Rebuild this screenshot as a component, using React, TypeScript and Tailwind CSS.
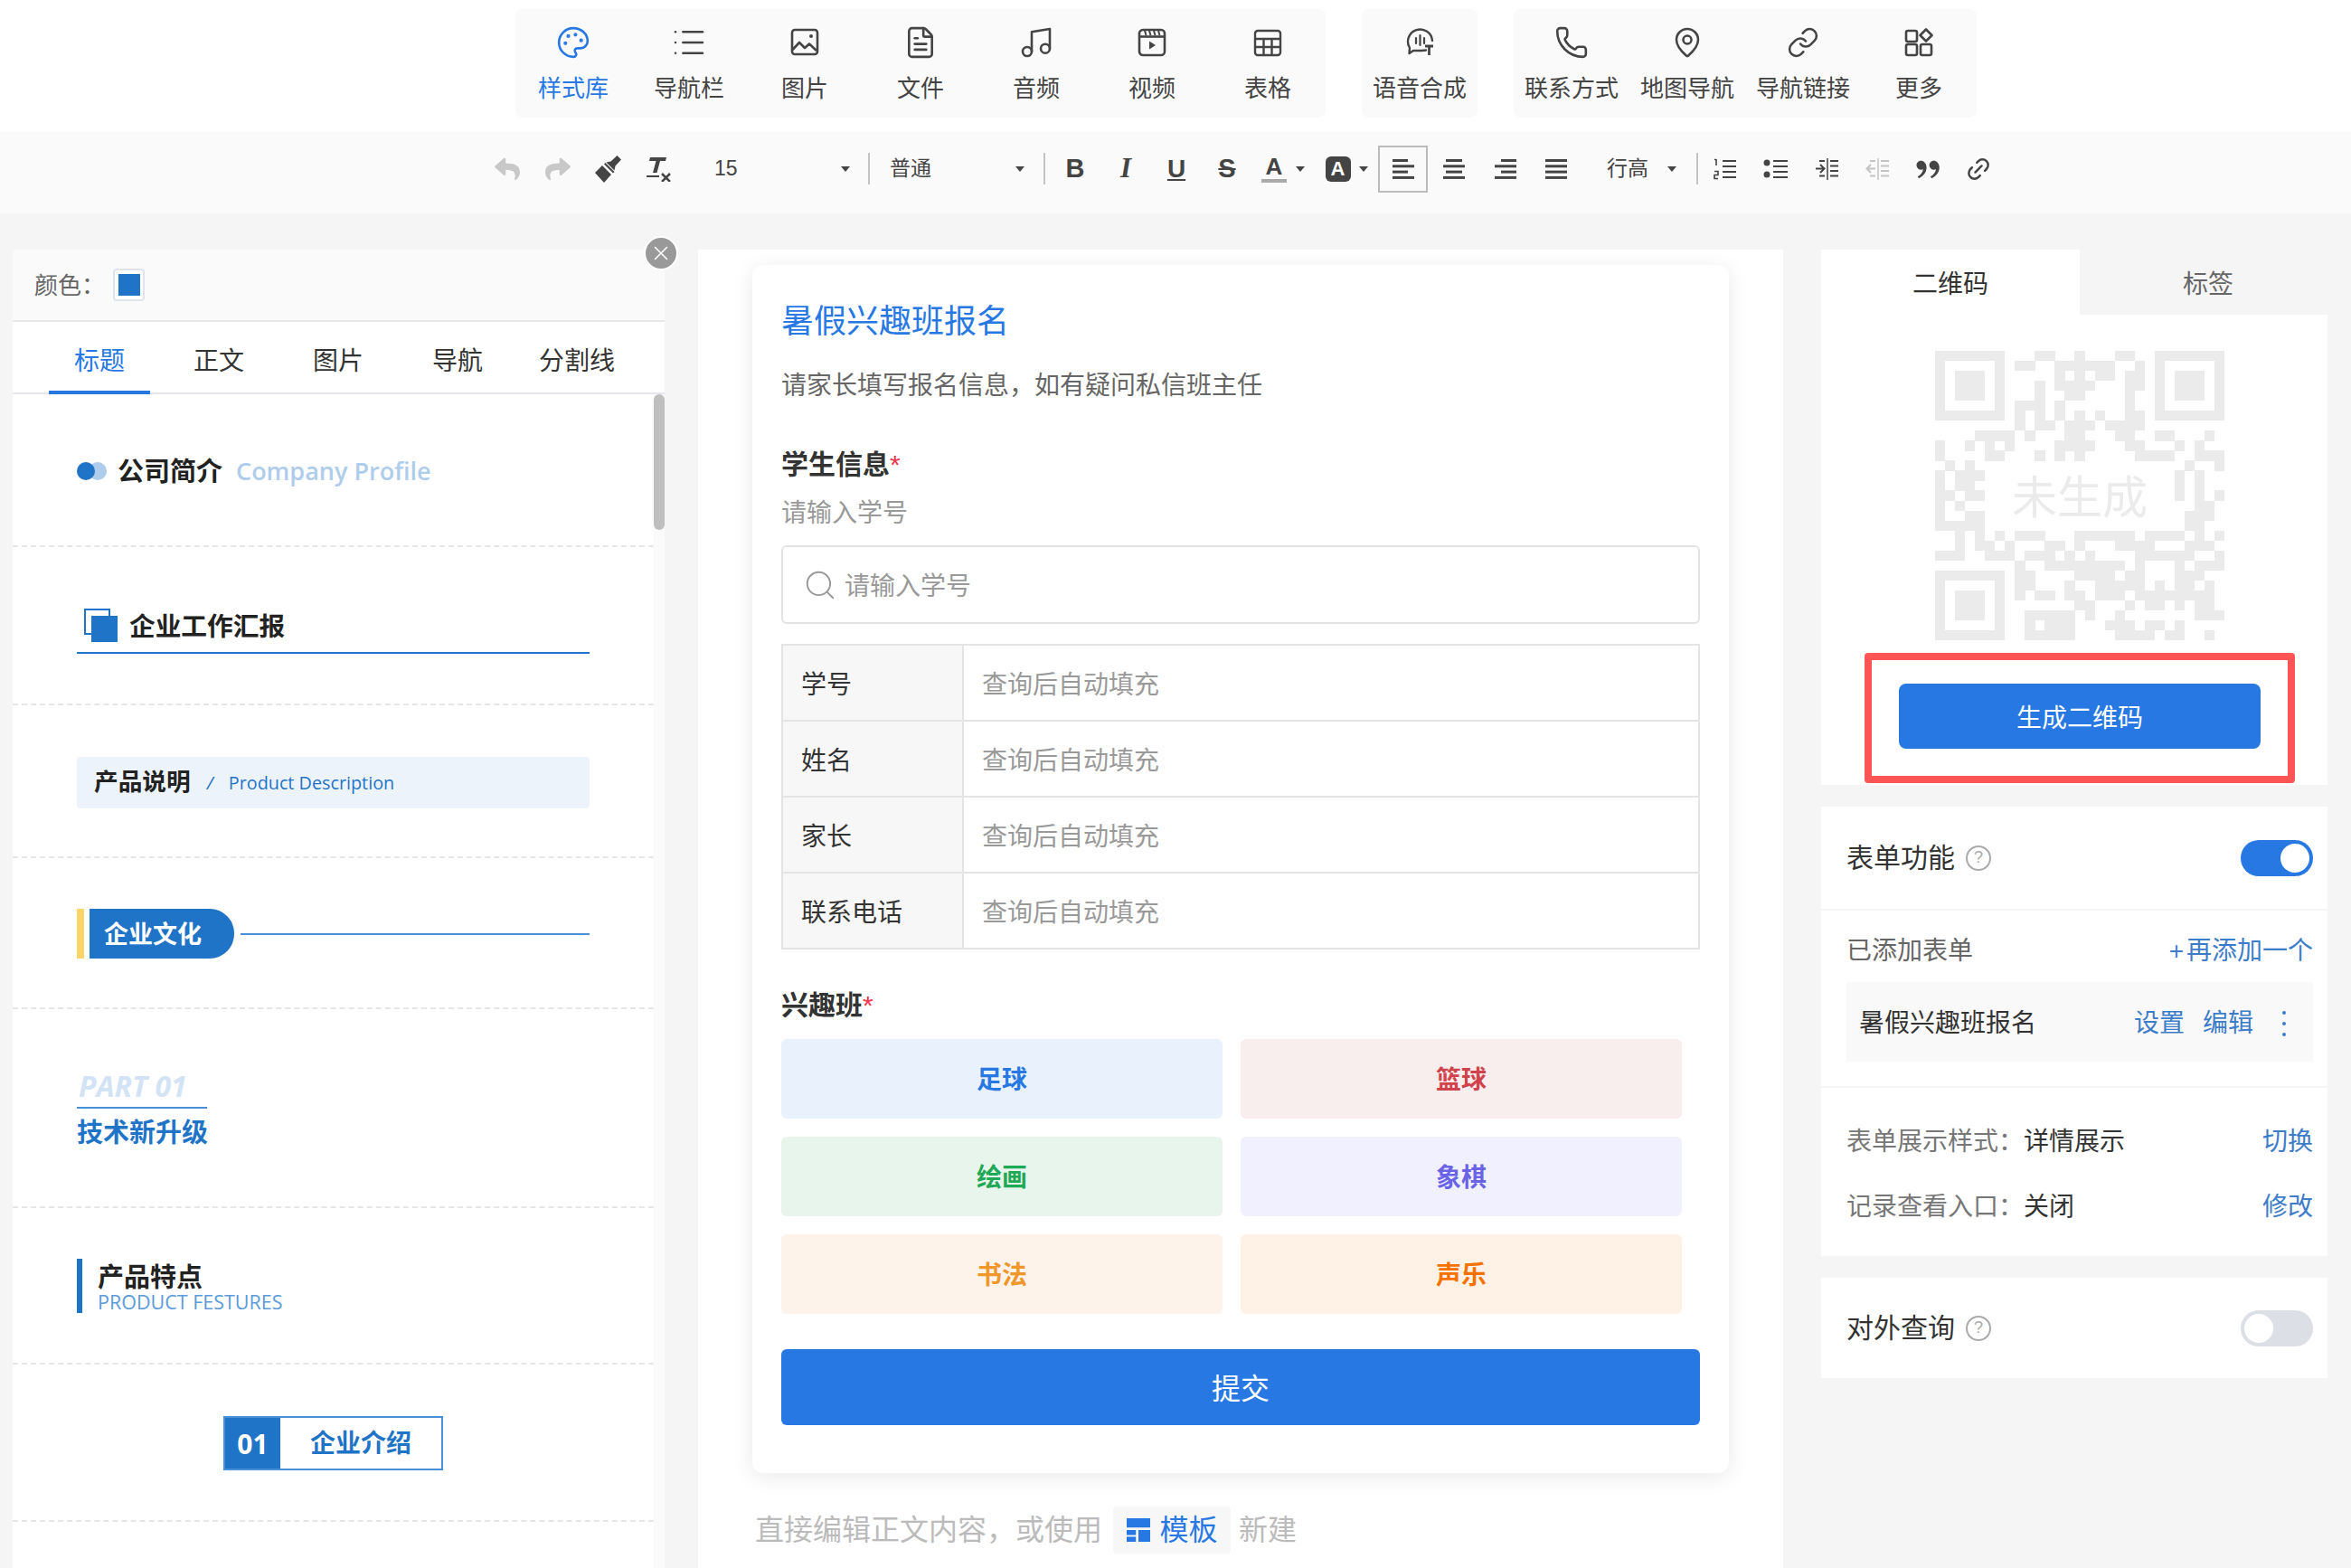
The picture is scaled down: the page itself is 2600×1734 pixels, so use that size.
import type { ReactNode } from 'react'
import { FileText, Link, Link2, List, MapPin, Music, Palette, Phone, Search, X } from 'lucide-react'
import { FaReply, FaShare } from 'react-icons/fa'
import { RiDoubleQuotesR } from 'react-icons/ri'

const iconClass = 'h-8 w-8'

function ImageIcon() {
  return (
    <svg viewBox="0 0 32 32" className={iconClass} fill="none" stroke="currentColor" strokeWidth="2.6" strokeLinejoin="round">
      <rect x="2" y="2" width="28" height="27" rx="3" />
      <path d="M2.5 24l7.5-8 6 6 5-4.500 8 7.500" />
      <circle cx="23" cy="9" r="2" fill="currentColor" stroke="none" />
    </svg>
  )
}

function VideoIcon() {
  return (
    <svg viewBox="0 0 32 32" className={iconClass} fill="none" stroke="currentColor" strokeWidth="2.6">
      <rect x="2" y="2" width="28" height="28" rx="4" />
      <path d="M2 9.500h28" />
      <path d="M8 3l1.500 5M13 3l1.500 5M18 3l1.500 5M23 3l1.500 5" strokeWidth="2" />
      <path d="M13 14.500l7 4.500-7 4.500z" fill="currentColor" stroke="none" />
    </svg>
  )
}

function TableIcon() {
  return (
    <svg viewBox="0 0 32 32" className={iconClass} fill="none" stroke="currentColor" strokeWidth="2.4">
      <rect x="2" y="3" width="28" height="27" rx="3" />
      <path d="M2 12h28M2 21h28M11.500 12v18M20.500 12v18" />
    </svg>
  )
}

function SpeechIcon() {
  return (
    <svg viewBox="0 0 32 32" className={iconClass} fill="none" stroke="currentColor" strokeWidth="2.4" strokeLinecap="round" strokeLinejoin="round">
      <path d="M23 24.500l-5 .500H9l-4.500 3 .500-6A13.500 13.500 0 1 1 30 14" />
      <path d="M12 11v6M16.500 8v11M21 11v6" strokeWidth="2.200" />
      <path d="M22 20h9M26.500 20v10" strokeLinecap="butt" strokeWidth="2.800" />
    </svg>
  )
}

function MoreIcon() {
  return (
    <svg viewBox="0 0 32 32" className={iconClass} fill="none" stroke="currentColor" strokeWidth="2.6" strokeLinejoin="round">
      <rect x="2" y="3" width="12" height="12" rx="2" />
      <rect x="2" y="18" width="12" height="12" rx="2" />
      <rect x="18" y="18" width="12" height="12" rx="2" />
      <path d="M24 1.500l6.500 6.500-6.500 6.500-6.500-6.500z" />
    </svg>
  )
}

const groups: { label: string; icon: ReactNode; active?: boolean }[][] = [
  [
    { label: '样式库', icon: <Palette size={38} strokeWidth={1.650} />, active: true },
    { label: '导航栏', icon: <List size={40} strokeWidth={1.500} /> },
    { label: '图片', icon: <ImageIcon /> },
    { label: '文件', icon: <FileText size={38} strokeWidth={1.650} /> },
    { label: '音频', icon: <Music size={40} strokeWidth={1.550} /> },
    { label: '视频', icon: <VideoIcon /> },
    { label: '表格', icon: <TableIcon /> },
  ],
  [{ label: '语音合成', icon: <SpeechIcon /> }],
  [
    { label: '联系方式', icon: <Phone size={38} strokeWidth={1.650} /> },
    { label: '地图导航', icon: <MapPin size={36} strokeWidth={1.700} /> },
    { label: '导航链接', icon: <Link size={36} strokeWidth={1.700} /> },
    { label: '更多', icon: <MoreIcon /> },
  ],
]

function TopBar() {
  return (
    <div className="flex h-[146px] gap-[40px] bg-white pl-[570px] pt-[10px]">
      {groups.map((group) => (
        <div key={group[0].label} className="flex h-[120px] rounded-lg bg-[#fafafa]">
          {group.map((item) => (
            <div
              key={item.label}
              className={`flex w-[128px] flex-col items-center pt-[17px] text-[26px] leading-[36px] ${item.active ? 'text-[#2878e4]' : 'text-[#444]'}`}
            >
              <span className="flex h-[40px] w-[44px] items-center justify-center">{item.icon}</span>
              <span className="mt-[13px] whitespace-nowrap">{item.label}</span>
            </div>
          ))}
        </div>
      ))}
    </div>
  )
}

function Caret() {
  return <span className="h-0 w-0 border-x-[5px] border-t-[6px] border-x-transparent border-t-[#444]" />
}

function Sep() {
  return <span className="h-[35px] w-[2px] bg-[#c4c4c4]" />
}

function Btn({ w = 'w-[56px]', children }: { w?: string; children: ReactNode }) {
  return <span className={`flex h-[52px] items-center justify-center ${w}`}>{children}</span>
}

function BrushIcon() {
  return (
    <svg viewBox="0 0 30 30" className="h-[30px] w-[30px]" fill="#444">
      <path d="M0 19l8-8 10 10-8 9z" />
      <path d="M10 9.500l1.500-1.500 10 10-1.500 1.500z" />
      <path d="M12.500 7.500l5-1 7-6.500 4.500 4.500-6.500 7-1 5z" />
    </svg>
  )
}

function ClearIcon() {
  return (
    <svg viewBox="0 0 28 28" className="h-[28px] w-[28px]" fill="#444">
      <path d="M4 1h18l-1 4h-6l-3.500 13H7l3.500-13H3z" />
      <rect x="0" y="21" width="14" height="2" />
      <path d="M17 19l9 9M26 19l-9 9" stroke="#444" strokeWidth="2.500" />
    </svg>
  )
}

function Bars({ rows }: { rows: [number, number][] }) {
  return (
    <svg viewBox="0 0 24 22" className="h-[22px] w-[24px]" fill="#444">
      {rows.map(([x, w], i) => (
        <rect key={i} x={x} y={i * 6.300} width={w} height="3" />
      ))}
    </svg>
  )
}

function OrderedIcon() {
  return (
    <svg viewBox="0 0 26 24" className="h-[24px] w-[26px]" fill="none" stroke="#444" strokeWidth="2.200">
      <path d="M10 3h15M10 9h15M10 15h15M10 21h15" />
      <path d="M3 1v7M1 1.500h2M1 14.500h4v4H1v4h4" strokeWidth="1.600" />
    </svg>
  )
}

function BulletIcon() {
  return (
    <svg viewBox="0 0 28 24" className="h-[24px] w-[28px]" fill="none" stroke="#444" strokeWidth="2.200">
      <path d="M11 3h16M11 9h16M11 15h16M11 21h16" />
      <circle cx="4" cy="5" r="3.500" fill="#444" stroke="none" />
      <circle cx="4" cy="18" r="3.500" fill="#444" stroke="none" />
    </svg>
  )
}

function IndentIcon({ out }: { out?: boolean }) {
  return (
    <svg viewBox="0 0 28 28" className="h-[28px] w-[28px]" fill="none" stroke={out ? '#c4c4c4' : '#444'} strokeWidth="2">
      <path d="M15 2v24" strokeWidth="1.500" />
      <path d="M18 5h9M18 10.500h9M18 16h9M18 21.500h9M6 5h6M6 21.500h6" />
      {out ? <path d="M12 13.500H3M7 9l-4.500 4.500L7 18" /> : <path d="M2 13.500h9M7 9l4.500 4.500L7 18" />}
    </svg>
  )
}

function EditorToolbar() {
  return (
    <div className="flex h-[90px] items-center bg-[#fafafa] pb-[9px] pl-[533px] text-[#444]">
      <Btn><FaReply size={28} color="#c8c8c8" /></Btn>
      <Btn><FaShare size={28} color="#c8c8c8" /></Btn>
      <Btn><BrushIcon /></Btn>
      <Btn><ClearIcon /></Btn>
      <span className="flex w-[203px] items-center justify-between pl-[33px] pr-[20px] text-[23px]">
        15 <Caret />
      </span>
      <Sep />
      <span className="flex w-[192px] items-center justify-between pl-[22px] pr-[21px] text-[23px]">
        普通 <Caret />
      </span>
      <Sep />
      <span className="w-[5px]" />
      <Btn><b className="text-[29px]">B</b></Btn>
      <Btn><i className="font-['Liberation_Serif',serif] text-[31px] font-bold">I</i></Btn>
      <Btn><b className="text-[28px] underline underline-offset-2">U</b></Btn>
      <Btn><b className="text-[29px] line-through">S</b></Btn>
      <Btn w="w-[48px]">
        <span className="flex flex-col items-center">
          <b className="text-[26px] leading-[27px]">A</b>
          <span className="h-[4px] w-[28px] bg-[#aaa]" />
        </span>
      </Btn>
      <span className="flex w-[10px] justify-center"><Caret /></span>
      <span className="ml-[13px] w-[47px]">
        <Btn w="w-[47px]">
          <span className="flex h-[28px] w-[28px] items-center justify-center rounded-md bg-[#444] text-[22px] font-bold text-white">A</span>
        </Btn>
      </span>
      <span className="flex w-[10px] justify-center"><Caret /></span>
      <span className="ml-[11px] flex h-[52px] w-[55px] items-center justify-center border-2 border-[#bbb]">
        <Bars rows={[[0, 17], [0, 24], [0, 17], [0, 24]]} />
      </span>
      <Btn w="w-[58px]"><Bars rows={[[3, 18], [0, 24], [3, 18], [0, 24]]} /></Btn>
      <Btn><Bars rows={[[7, 17], [0, 24], [7, 17], [0, 24]]} /></Btn>
      <Btn><Bars rows={[[0, 24], [0, 24], [0, 24], [0, 24]]} /></Btn>
      <span className="ml-[28px] flex w-[99px] items-center text-[23px]">
        行高
        <span className="ml-[21px] flex"><Caret /></span>
      </span>
      <Sep />
      <span className="w-[2px]" />
      <Btn><OrderedIcon /></Btn>
      <Btn><BulletIcon /></Btn>
      <Btn><IndentIcon /></Btn>
      <Btn><IndentIcon out /></Btn>
      <Btn><RiDoubleQuotesR size={34} color="#444" /></Btn>
      <Btn><Link2 size={30} className="-rotate-45" /></Btn>
    </div>
  )
}

function StyleItem({ h, children }: { h: string; children: ReactNode }) {
  return <div className={`flow-root border-b-2 border-dashed border-[#e6e6e6] pl-[71px] pr-[71px] ${h}`}>{children}</div>
}

function StylePanel() {
  const tabs = ['标题', '正文', '图片', '导航', '分割线']
  return (
    <div className="relative h-full w-[721px] shrink-0 bg-[#fafafa]">
      <span className="absolute -right-[15px] -top-[15px] z-10 flex h-[38px] w-[38px] items-center justify-center rounded-full border-2 border-white bg-[#999]">
        <X size={26} color="#fff" strokeWidth={1.500} />
      </span>
      <div className="flex h-[80px] items-center border-b-2 border-[#e8e8e8] pl-[24px] text-[26px] text-[#666]">
        <span className="pt-[3px]">颜色：</span>
        <span className="ml-[9px] flex h-[36px] w-[35px] items-center justify-center rounded border-2 border-[#dfe3ea] bg-white">
          <span className="h-[24px] w-[24px] bg-[#1f74c7]" />
        </span>
      </div>
      <div className="flex h-[80px] border-b-2 border-[#e6e6ee] bg-white pl-[30px]">
        {tabs.map((tab, i) => (
          <div key={tab} className="w-[132px] px-[10px] text-center">
            <div
              className={`-mb-[2px] h-[80px] whitespace-nowrap pt-[24px] text-[28px] leading-[40px] ${i === 0 ? 'border-b-4 border-[#2878e4] text-[#2878e4]' : 'text-[#333]'}`}
            >
              {tab}
            </div>
          </div>
        ))}
      </div>
      <div className="flex">
        <div className="w-[709px] bg-white text-[#222]">
          <StyleItem h="h-[169px]">
            <div className="mt-[64px] flex items-center">
              <span className="relative z-10 h-[20px] w-[20px] rounded-full bg-[#1f74c7]" />
              <span className="-ml-[7px] h-[20px] w-[20px] rounded-full bg-[#aecdec]" />
              <b className="ml-[12px] pt-[2px] text-[29px] leading-[40px]">公司简介</b>
              <span className="ml-[15px] font-['Open_Sans',sans-serif] text-[27px] font-semibold leading-[40px] text-[#aecdec]">Company Profile</span>
            </div>
          </StyleItem>
          <StyleItem h="h-[175px]">
            <div className="mt-[68px] flex h-[50px] items-start border-b-2 border-[#1f74c7] pl-[8px]">
              <span className="relative h-[37px] w-[37px]">
                <span className="absolute left-0 top-0 h-[29px] w-[29px] border-2 border-[#1f74c7]" />
                <span className="absolute bottom-0 right-0 h-[29px] w-[29px] bg-[#1f74c7]" />
              </span>
              <b className="ml-[13px] text-[28.700px] leading-[40px]">企业工作汇报</b>
            </div>
          </StyleItem>
          <StyleItem h="h-[169px]">
            <div className="mt-[57px] flex h-[57px] items-center rounded bg-[#edf3fb] pl-[19px] text-[#1f74c7]">
              <b className="text-[26.700px] text-[#222]">产品说明</b>
              <span className="ml-[18px] font-['Open_Sans',sans-serif] text-[20px] italic">/</span>
              <span className="ml-[17px] font-['Open_Sans',sans-serif] text-[19.800px]">Product Description</span>
            </div>
          </StyleItem>
          <StyleItem h="h-[167px]">
            <div className="mt-[56px] flex h-[55px] items-center">
              <span className="h-full w-[8px] bg-[#ffd466]" />
              <b className="ml-[6px] flex h-full w-[160px] items-center rounded-r-[27px] bg-[#1f74c7] pl-[16px] pt-[3px] text-[27px] text-white">企业文化</b>
              <span className="ml-[7px] h-[2px] flex-1 bg-[#4a90d9]" />
            </div>
          </StyleItem>
          <StyleItem h="h-[220px]">
            <div className="mt-[64px] w-[144px]">
              <div className="whitespace-nowrap border-b-2 border-[#4a90d9] pb-[2px] pl-[2px] font-['Open_Sans',sans-serif] text-[32px] font-bold italic leading-[42px] text-[#d2e3f5]">PART 01</div>
              <b className="block whitespace-nowrap pt-[1px] text-[29px] leading-[52px] text-[#1f74c7]">技术新升级</b>
            </div>
          </StyleItem>
          <StyleItem h="h-[173px]">
            <div className="mt-[56px] flex h-[60px] border-l-[6px] border-[#1f74c7] pl-[17px]">
              <div>
                <b className="block pt-[3px] text-[29px] leading-[36px]">产品特点</b>
                <span className="-mt-[5px] block font-['Open_Sans',sans-serif] text-[21.500px] leading-[28px] text-[#5b9bd9]">PRODUCT FESTURES</span>
              </div>
            </div>
          </StyleItem>
          <StyleItem h="h-[174px]">
            <div className="mt-[57px] flex justify-center">
              <div className="flex h-[60px] w-[243px] border-2 border-[#4a90d9]">
                <b className="flex w-[61px] items-center justify-center bg-[#1f74c7] font-['Open_Sans',sans-serif] text-[30px] text-white">01</b>
                <b className="flex flex-1 items-center justify-center pt-[2px] text-[28px] text-[#1f74c7]">企业介绍</b>
              </div>
            </div>
          </StyleItem>
          <div className="h-[60px]" />
        </div>
        <div className="w-[12px]">
          <div className="h-[150px] rounded-md bg-[#bfbfbf]" />
        </div>
      </div>
    </div>
  )
}

const infoRows = ['学号', '姓名', '家长', '联系电话']
const options = [
  ['足球', 'bg-[#e9f1fc] text-[#2878e4]'],
  ['篮球', 'bg-[#f9eeee] text-[#d0434d]'],
  ['绘画', 'bg-[#e8f5ec] text-[#1fa855]'],
  ['象棋', 'bg-[#f1f0fe] text-[#6a63e6]'],
  ['书法', 'bg-[#fdf3ea] text-[#f0962a]'],
  ['声乐', 'bg-[#fef2e6] text-[#f57200]'],
]

function FormPreview() {
  return (
    <div className="ml-[37px] h-full w-[1200px] shrink-0 bg-white pt-[17px]">
      <div className="mx-[60px] rounded-xl bg-white px-[32px] pb-[53px] pt-[38px] shadow-[0_4px_24px_rgba(0,0,0,0.09)]">
        <div className="text-[36px] leading-[50px] text-[#2878e4]">暑假兴趣班报名</div>
        <div className="mt-[26px] text-[28px] leading-[40px] text-[#666]">请家长填写报名信息，如有疑问私信班主任</div>
        <div className="mt-[47px] text-[30px] font-bold leading-[40px] text-[#333]">
          学生信息<span className="font-normal text-[#f5364f]">*</span>
        </div>
        <div className="mt-[14px] text-[28px] leading-[40px] text-[#999]">请输入学号</div>
        <div className="mt-[15px] flex h-[87px] w-[1016px] items-center rounded-md border-2 border-[#e2e2e2] pl-[22px] text-[28px] text-[#999]">
          <Search size={38} strokeWidth={1.200} />
          <span className="ml-[8px] pt-[5px]">请输入学号</span>
        </div>
        <div className="mt-[22px] w-[1016px] border-2 border-b-0 border-[#e4e4e4]">
          {infoRows.map((row) => (
            <div key={row} className="flex h-[84px] border-b-2 border-[#e4e4e4] text-[28px]">
              <div className="flex w-[200px] items-center border-r-2 border-[#e4e4e4] bg-[#f7f7f7] pl-[20px] pt-[5px] text-[#333]">{row}</div>
              <div className="flex items-center pl-[20px] pt-[5px] text-[#999]">查询后自动填充</div>
            </div>
          ))}
        </div>
        <div className="mt-[42px] text-[30px] font-bold leading-[40px] text-[#333]">
          兴趣班<span className="font-normal text-[#f5364f]">*</span>
        </div>
        <div className="mt-[17px] grid w-[996px] grid-cols-2 gap-x-[20px] gap-y-[20px]">
          {options.map(([name, tone]) => (
            <div key={name} className={`flex h-[88px] items-center justify-center rounded-md pt-[3px] text-[28px] font-bold ${tone}`}>
              {name}
            </div>
          ))}
        </div>
        <div className="mt-[39px] flex h-[84px] w-[1016px] items-center justify-center rounded-md bg-[#2878e4] pt-[3px] text-[32px] text-white">提交</div>
      </div>
      <div className="mt-[37px] flex h-[52px] items-center pl-[63px] text-[32px] text-[#bbb]">
        直接编辑正文内容，或使用
        <span className="ml-[12px] flex h-[52px] w-[130px] items-center justify-center gap-[11px] rounded bg-[#f7f7f7] text-[#2878e4]">
          <svg viewBox="0 0 28 28" className="h-[26px] w-[26px]" fill="#2878e4">
            <rect x="0" y="0" width="28" height="11" />
            <rect x="0" y="14" width="11" height="6" />
            <rect x="0" y="22" width="11" height="6" />
            <rect x="14" y="14" width="14" height="14" />
          </svg>
          模板
        </span>
        <span className="ml-[9px]">新建</span>
      </div>
    </div>
  )
}

// 二维码占位图的模块，按行列出非定位点的列号
const qrRows: number[][] = [
  [10, 11, 14, 18, 19],
  [8, 9, 12, 13, 14, 15, 16, 17, 20],
  [12, 14, 16, 17, 19, 20],
  [10, 12, 13, 14, 15, 19, 20],
  [10, 13, 14, 19],
  [8, 9, 10, 12, 19],
  [8, 10, 12, 14, 16, 19, 20],
  [8, 10, 11, 13, 14, 15, 17, 18, 19, 20],
  [4, 5, 6, 7, 9, 13, 14, 18, 19, 22, 23, 27],
  [0, 3, 5, 7, 12, 13, 14, 15, 19, 20, 24, 26],
  [0, 5, 6, 10, 12, 14, 20, 21, 22, 23, 26, 27, 28],
  [1, 3, 25, 28],
  [0, 2, 3, 4, 24, 26],
  [0, 2, 3, 24, 26],
  [0, 1, 3, 4, 24, 26, 28],
  [0, 2, 26, 27],
  [0, 3, 4, 25, 26, 27],
  [0, 1, 2, 3, 4, 25, 26],
  [2, 4, 6, 8, 9, 10, 14, 15, 16, 17, 18, 19, 21, 22, 23, 24, 26, 28],
  [2, 4, 5, 7, 11, 12, 14, 18, 19, 20, 21, 25, 26, 27],
  [0, 1, 2, 5, 6, 7, 9, 10, 11, 13, 15, 20, 21, 22, 23, 24, 25, 28],
  [8, 11, 12, 13, 14, 15, 16, 17, 18, 20, 24, 26, 27, 28],
  [8, 9, 14, 15, 16, 17, 19, 20, 24, 25, 26],
  [8, 9, 13, 16, 17, 18, 19, 20, 22, 24, 25, 27],
  [8, 10, 11, 13, 14, 16, 17, 18, 20, 21, 22, 23, 24, 25, 26, 27],
  [14, 15, 19, 21, 22, 24, 26, 27],
  [9, 10, 11, 12, 13, 15, 18, 26, 27, 28],
  [9, 11, 12, 13, 17, 18, 19, 21, 22, 24],
  [9, 10, 11, 12, 13, 18, 19, 20, 21, 23, 24, 27],
]

function QrPlaceholder() {
  const finders = [
    [0, 0],
    [22, 0],
    [0, 22],
  ]
  return (
    <div className="relative ml-[126px] h-[320px] w-[320px]">
      <svg viewBox="0 0 29 29" className="h-[320px] w-[320px]" fill="#ebebeb" shapeRendering="crispEdges">
        {qrRows.map((cols, y) => cols.map((x) => <rect key={`${x}-${y}`} x={x} y={y} width="1.020" height="1.020" />))}
        {finders.map(([x, y]) => (
          <g key={`${x}-${y}`}>
            <path d={`M${x} ${y}h7v7h-7zM${x + 1} ${y + 1}v5h5v-5z`} fillRule="evenodd" />
            <rect x={x + 2} y={y + 2} width="3" height="3" />
          </g>
        ))}
      </svg>
      <span className="absolute inset-0 flex items-center justify-center pt-[6px] text-[50px] text-[#ebebeb]">未生成</span>
    </div>
  )
}

function Help() {
  return (
    <span className="ml-[12px] flex h-[28px] w-[28px] items-center justify-center rounded-full border-2 border-[#aaa] text-[18px] text-[#aaa]">?</span>
  )
}

function Toggle({ on }: { on?: boolean }) {
  return (
    <span className={`flex h-[40px] w-[80px] items-center rounded-full px-[4px] ${on ? 'justify-end bg-[#2878e4]' : 'bg-[#dcdfe6]'}`}>
      <span className="h-[32px] w-[32px] rounded-full bg-white" />
    </span>
  )
}

function SidePanel() {
  return (
    <div className="ml-[42px] w-[560px] shrink-0">
      <div className="h-[592px] bg-white">
        <div className="flex h-[72px] text-[28px]">
          <div className="flex w-[286px] items-center justify-center pt-[5px] text-[#333]">二维码</div>
          <div className="flex flex-1 items-center justify-center bg-[#f5f5f5] pl-[10px] pt-[5px] text-[#666]">标签</div>
        </div>
        <div className="pt-[40px]">
          <QrPlaceholder />
        </div>
        <div className="ml-[48px] mt-[14px] w-[476px] rounded-sm border-[8px] border-[#ff5555] px-[30px] pb-[30px] pt-[26px]">
          <div className="flex h-[72px] items-center justify-center rounded-lg bg-[#2878e4] pt-[5px] text-[28px] text-white">生成二维码</div>
        </div>
      </div>

      <div className="mt-[24px] bg-white text-[28px]">
        <div className="flex h-[113px] items-center pl-[28px] pr-[16px] text-[30px] text-[#333]">
          表单功能
          <Help />
          <span className="flex-1" />
          <Toggle on />
        </div>
        <div className="h-[198px] border-y-2 border-[#f5f5f5] pl-[28px] pr-[16px] pt-[25px]">
          <div className="flex h-[40px] items-center justify-between text-[#666]">
            已添加表单
            <span className="text-[#3d7cc9]">
              <span className="mr-[3px]">+</span>再添加一个
            </span>
          </div>
          <div className="mt-[14px] flex h-[88px] items-center bg-[#f9f9f9] pl-[14px] pt-[4px] text-[#333]">
            暑假兴趣班报名
            <span className="ml-[108px] text-[#3d7cc9]">设置</span>
            <span className="ml-[20px] text-[#3d7cc9]">编辑</span>
            <span className="ml-[32px] flex flex-col gap-[8px]">
              <span className="h-[4px] w-[4px] rounded-full bg-[#3d7cc9]" />
              <span className="h-[4px] w-[4px] rounded-full bg-[#3d7cc9]" />
              <span className="h-[4px] w-[4px] rounded-full bg-[#3d7cc9]" />
            </span>
          </div>
        </div>
        <div className="h-[186px] pl-[28px] pr-[16px] pt-[40px]">
          <div className="flex h-[40px] items-center text-[#777]">
            表单展示样式：<span className="text-[#333]">详情展示</span>
            <span className="ml-auto text-[#3d7cc9]">切换</span>
          </div>
          <div className="mt-[32px] flex h-[40px] items-center text-[#777]">
            记录查看入口：<span className="text-[#333]">关闭</span>
            <span className="ml-auto text-[#3d7cc9]">修改</span>
          </div>
        </div>
      </div>

      <div className="mt-[24px] flex h-[111px] items-center bg-white pl-[28px] pr-[16px] text-[30px] text-[#333]">
        对外查询
        <Help />
        <span className="flex-1" />
        <Toggle />
      </div>
    </div>
  )
}

export default function App() {
  return (
    <div className="h-[1734px] w-[2600px] overflow-hidden bg-[#f5f5f5] font-['Liberation_Sans','Noto_Sans_CJK_SC',sans-serif]">
      <TopBar />
      <EditorToolbar />
      <div className="flex h-[1498px] pl-[14px] pt-[40px]">
        <StylePanel />
        <FormPreview />
        <SidePanel />
      </div>
    </div>
  )
}
